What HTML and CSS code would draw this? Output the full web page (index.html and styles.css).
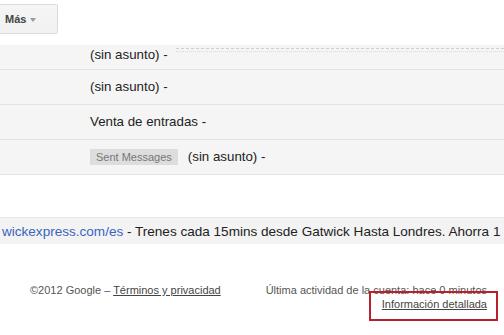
FILE: index.html
```html
<!DOCTYPE html>
<html lang="es">
<head>
<meta charset="utf-8">
<title>Gmail</title>
<link rel="stylesheet" href="styles.css">
</head>
<body>
<div class="toolbar">
  <div class="btn">Más<span class="caret"></span></div>
</div>
<div class="list">
  <div class="row first"><span class="subj">(sin asunto) -</span><span class="snip"></span></div>
  <div class="row"><span class="subj">(sin asunto) -</span></div>
  <div class="row"><span class="subj">Venta de entradas -</span></div>
  <div class="row"><span class="label">Sent Messages</span><span class="subj">(sin asunto) -</span></div>
</div>
<div class="gap"></div>
<div class="ad">
  <div class="ad-text"><span class="ad-url">wickexpress.com/es</span> - Trenes cada 15mins desde Gatwick Hasta Londres. Ahorra 1</div>
</div>
<div class="footer">
  <div class="foot-left">©2012 Google – <a class="flink">Términos y privacidad</a></div>
  <div class="foot-right">
    <div>Última actividad de la cuenta: hace 0 minutos</div>
    <div><a class="flink details">Información detallada</a></div>
  </div>
</div>
</body>
</html>
```
FILE: styles.css
```css
html, body {
  margin: 0;
  padding: 0;
  background: #fff;
  font-family: "Liberation Sans", Arial, sans-serif;
}
body {
  width: 504px;
  height: 335px;
  overflow: hidden;
}
.toolbar {
  height: 45px;
  padding-top: 4px;
  box-sizing: border-box;
}
.btn {
  width: 58px;
  height: 30px;
  box-sizing: border-box;
  border: 1px solid #dcdcdc;
  border-left: none;
  border-radius: 0 2px 2px 0;
  background: linear-gradient(#f5f5f5, #f1f1f1);
  color: #444;
  font-size: 11px;
  font-weight: bold;
  display: flex;
  align-items: center;
  padding-left: 5px;
}
.caret {
  width: 0;
  height: 0;
  border-top: 4px solid #999;
  border-left: 3.5px solid transparent;
  border-right: 3.5px solid transparent;
  margin-left: 4px;
  margin-top: 1px;
}
.list {
  font-size: 13.3px;
  color: #222;
}
.row {
  display: flex;
  align-items: center;
  height: 35px;
  box-sizing: border-box;
  padding-left: 90px;
  padding-bottom: 1px;
  background: #f5f5f5;
  border-bottom: 1px solid #e2e2e2;
  line-height: 16px;
}
.row.first {
  height: 25px;
  align-items: flex-start;
  padding-top: 2px;
}
.snip {
  flex: 1;
  height: 2px;
  margin-top: 1px;
  margin-left: 8px;
  border-top: 1px dashed #cfcfcf;
  border-bottom: 1px dotted #dcdcdc;
}
.label {
  background: #dddddd;
  color: #777;
  font-size: 11px;
  line-height: 16px;
  padding: 0 6px;
  margin-right: 10px;
}
.gap {
  height: 42px;
}
.ad {
  height: 27px;
  box-sizing: border-box;
  border-top: 1px solid #e8e8e8;
  background: #f3f3f3;
  white-space: nowrap;
  font-size: 13.55px;
  line-height: 16px;
  color: #222;
  padding: 6px 0 0 2px;
}
.ad-url {
  color: #3a64c0;
}
.footer {
  display: flex;
  justify-content: space-between;
  padding: 39px 17px 0 30px;
  font-size: 11px;
  line-height: 14px;
  color: #555;
}
.foot-right {
  text-align: right;
}
.flink {
  color: #444;
  text-decoration: underline;
}
.details {
  position: relative;
}
.details::after {
  content: "";
  position: absolute;
  left: -13px;
  right: -11px;
  top: -7px;
  bottom: -11px;
  border: 2px solid #b8202c;
}
```
